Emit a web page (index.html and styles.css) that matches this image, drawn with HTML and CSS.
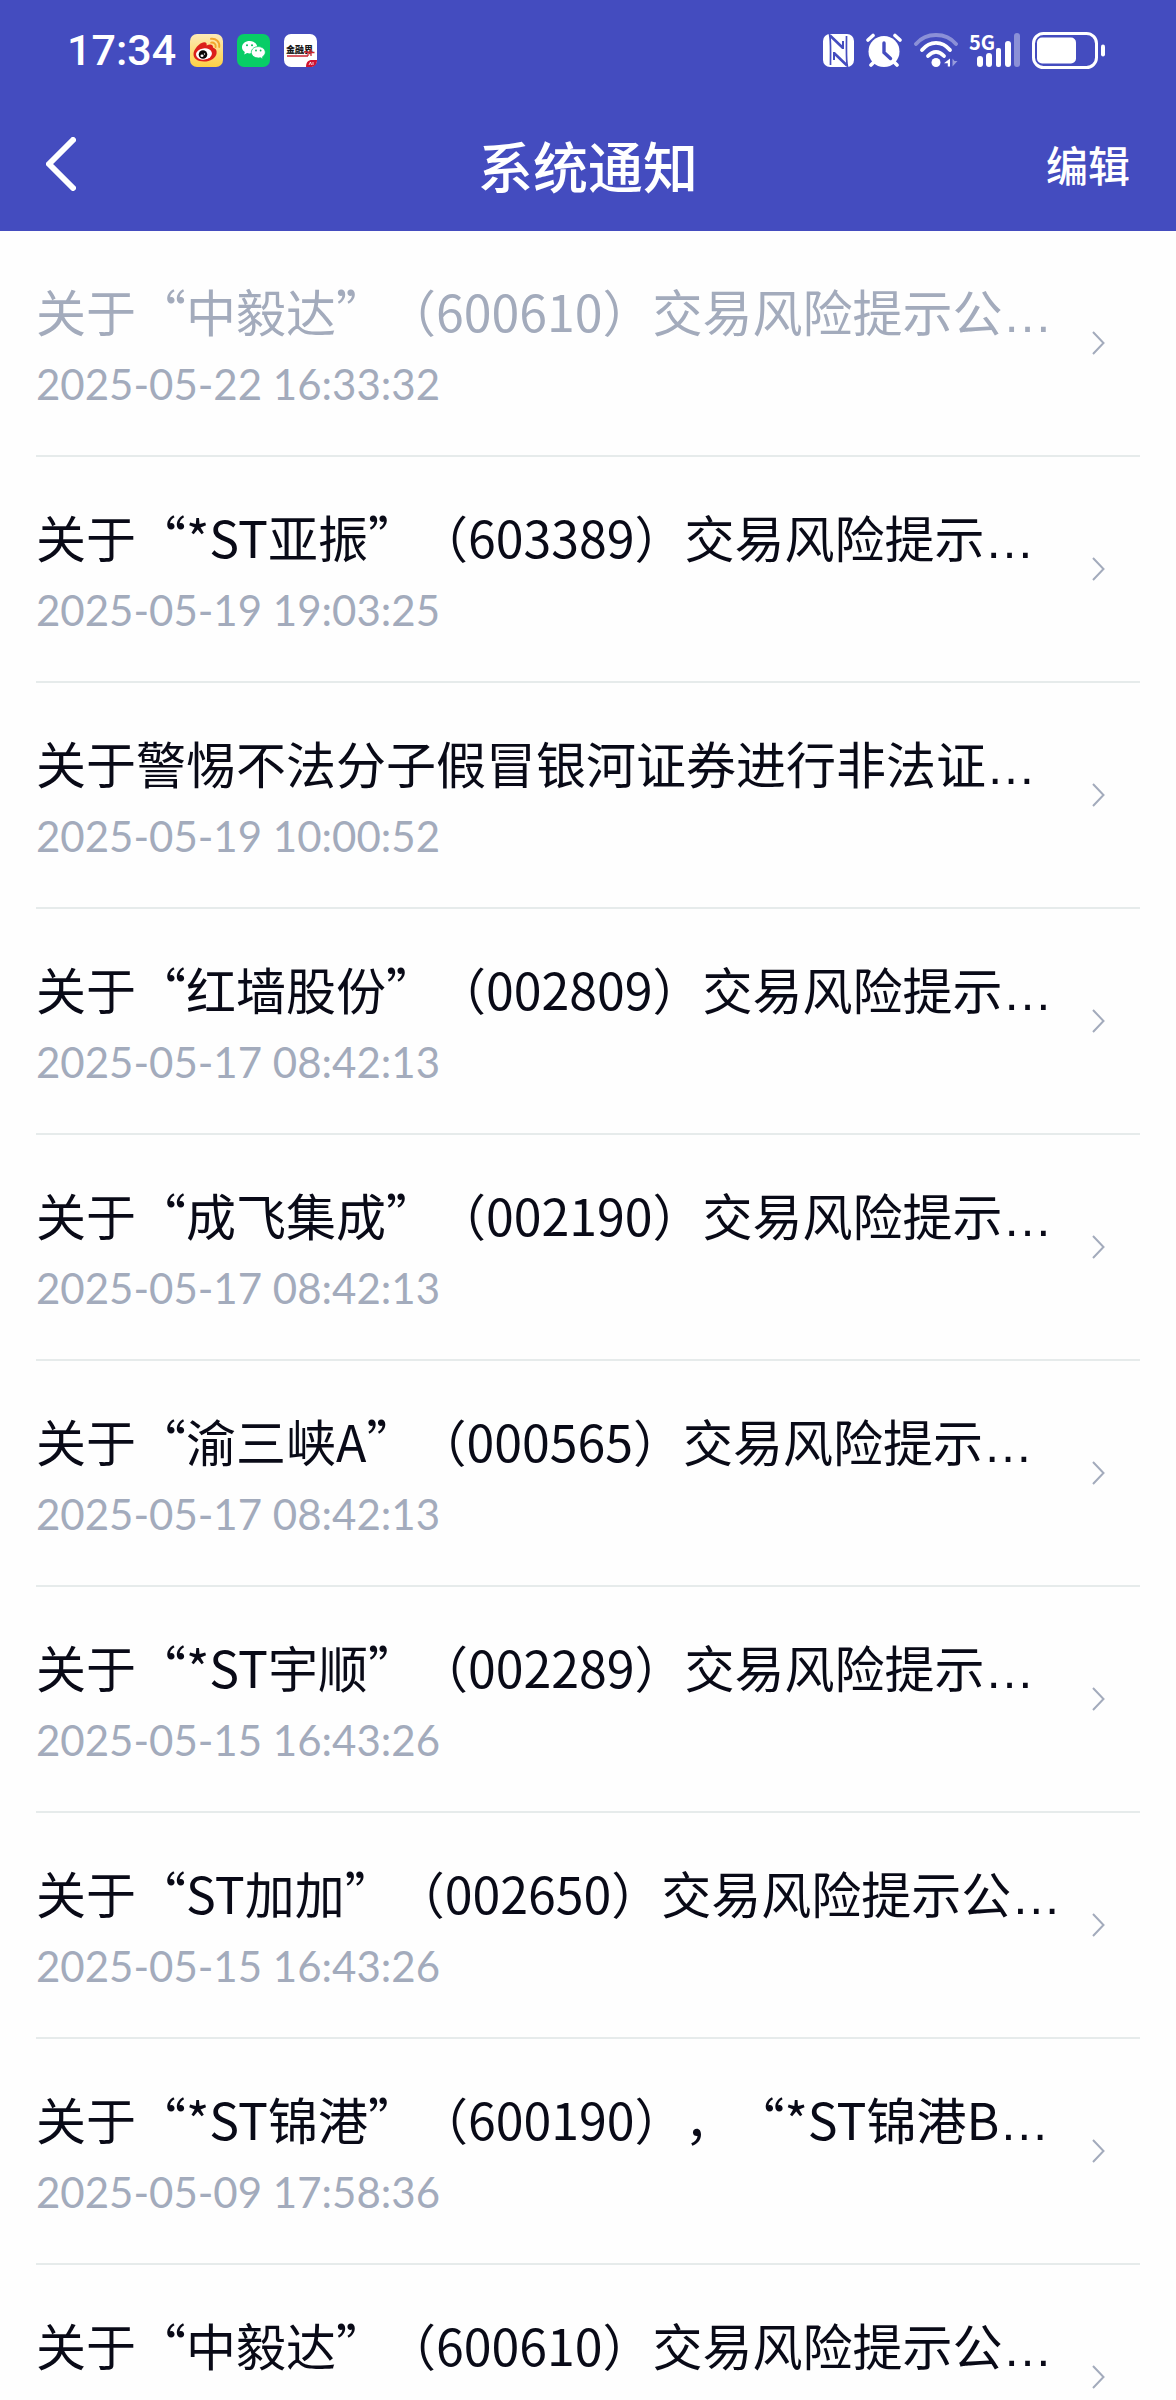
FILE: index.html
```html
<!DOCTYPE html>
<html lang="zh-CN">
<head>
<meta charset="utf-8">
<meta name="viewport" content="width=device-width, initial-scale=1">
<title>系统通知</title>
<link rel="stylesheet" href="styles.css">
</head>
<body>
<svg class="sprite"><symbol id="chevron" viewBox="0 0 14 24"><path d="M2 1l10.500 11L2 23" fill="none" stroke="#a3abbc" stroke-width="2"/></symbol></svg>
<div class="screen">
  <header class="header">
    <div class="status">
      <div class="status-left">
        <time class="clock">17:34</time>
        <svg class="app-icon" viewBox="0 0 33 33" role="img" aria-label="微博">
          <defs><linearGradient id="wb" x1="0" y1="0" x2="0" y2="1"><stop offset="0" stop-color="#fdeab8"/><stop offset="1" stop-color="#fdd045"/></linearGradient></defs>
          <rect width="33" height="33" rx="7" fill="url(#wb)"/>
          <path d="M3.500 20c0-4.500 6-11.500 10.500-11.800 2.500-.2 3 1.600 2.600 3.200 3-1.400 6.800-1.400 6.400 2.200 2.600 1 4 2.600 3.600 5.600-.6 4.800-6.400 8.300-12.600 8.300S3.500 24.800 3.500 20z" fill="#dc1f1b"/>
          <ellipse cx="14" cy="20" rx="8" ry="5.600" fill="#fff" transform="rotate(-8 14 20)"/>
          <circle cx="13" cy="20.500" r="4.300" fill="#080808"/>
          <ellipse cx="12" cy="21.800" rx="1.500" ry="1.200" fill="#fff"/><circle cx="14.500" cy="20" r=".7" fill="#fff"/>
          <path d="M21 4.800c5-.6 9 3.200 8.200 8.200M21.200 8.600c2.900-.3 4.900 1.600 4.400 4.400" fill="none" stroke="#f2a52d" stroke-width="1.900" stroke-linecap="round"/>
        </svg>
        <svg class="app-icon" viewBox="0 0 33 33" role="img" aria-label="微信">
          <rect width="33" height="33" rx="7" fill="#08cd66"/>
          <path d="M12.600 7C8.400 7 5 9.700 5 13.200c0 2 1.100 3.700 2.800 4.800l-.6 2.600 2.900-1.500c.8.200 1.600.3 2.500.3 4.200 0 7.600-2.700 7.600-6.200S16.800 7 12.600 7z" fill="#fff"/>
          <path d="M21.300 12.600c-3.900 0-7 2.500-7 5.700s3.100 5.700 7 5.700c.8 0 1.500-.1 2.200-.3l2.500 1.400-.5-2.300c1.700-1 2.800-2.600 2.800-4.500 0-3.200-3.100-5.700-7-5.700z" fill="#fff" stroke="#08cd66" stroke-width=".8"/>
          <g fill="#08b95c"><circle cx="10" cy="11.300" r="1"/><circle cx="15" cy="11.300" r="1"/><circle cx="19" cy="16.500" r=".9"/><circle cx="23.600" cy="16.500" r=".9"/></g>
        </svg>
        <svg class="app-icon" viewBox="0 0 33 33" role="img" aria-label="金融界">
          <rect width="33" height="33" rx="7" fill="#fff"/>
          <text class="logo-text" x="2" y="18.500">金融界</text>
          <path d="M3 19.300h17" stroke="#333" stroke-width="1.500" stroke-dasharray="2 .7"/>
          <path d="M3 22h21M24 22v-4h-4M27 15v7M24 18.500h6.500" fill="none" stroke="#c92532" stroke-width="1.300"/>
          <path d="M22 33c0-4.500 2-7 6-7h5c0 4.500-2.500 7-7 7z" fill="#cf1230"/>
          <path d="M25 31l1.500-3 1 3M29 28v3" fill="none" stroke="#fff" stroke-width=".8"/>
        </svg>
      </div>
      <div class="status-right">
        <svg class="nfc" viewBox="0 0 31 33" role="img" aria-label="NFC">
          <rect width="31" height="33" rx="7" fill="#fff"/>
          <g fill="none" stroke="#444cbf">
            <path d="M6.500 0C8 6 7.500 14 7.500 31M24.500 33C23 27 23.500 19 23.500 2" stroke-width="1.700"/>
            <path d="M7 1.500l13 12.500M24 31.500L11 19" stroke-width="2.600"/>
            <path d="M20 7v8M11 18v8" stroke-width="2"/>
          </g>
        </svg>
        <svg class="alarm" viewBox="0 0 36 34" role="img" aria-label="闹钟">
          <circle cx="18" cy="18.500" r="15.500" fill="#fff"/>
          <path d="M2 7l5-4.500M34 7l-5-4.500M5 32l5-5M31 32l-5-5" fill="none" stroke="#fff" stroke-width="3.600" stroke-linecap="round"/>
          <path d="M18 10v9.500l6.500 6" fill="none" stroke="#444cbf" stroke-width="3.400" stroke-linecap="round"/>
        </svg>
        <svg class="wifi" viewBox="0 0 44 34" role="img" aria-label="WLAN">
          <g fill="none" stroke="#fff" stroke-width="3.800" stroke-linecap="round">
            <path d="M2 11C12-1 32-1 42 11" opacity=".38"/>
            <path d="M8 17c8-9.500 20-9.500 28 0"/>
            <path d="M14 23c5-5.500 11-5.500 16 0"/>
          </g>
          <circle cx="22" cy="29.500" r="4.500" fill="#fff"/>
          <path d="M36 25.500v8h-2.200v-3.200H30z" fill="#fff"/><path d="M38.500 25.500v8l5-5.500h-3z" fill="#fff" opacity=".45"/>
        </svg>
        <svg class="signal" viewBox="0 0 50 34" role="img" aria-label="5G">
          <text class="net-text" x="-1" y="17">5G</text>
          <g fill="#fff"><rect x="7" y="23" width="6" height="11" rx="3"/><rect x="16" y="20" width="6" height="14" rx="3"/><rect x="26" y="15" width="5" height="19" rx="2"/><rect x="35" y="8" width="6" height="26" rx="3"/><rect x="44" y="0" width="6" height="34" rx="3" opacity=".38"/></g>
        </svg>
        <svg class="battery" viewBox="0 0 74 37" role="img" aria-label="电量">
          <rect x="1.500" y="1.500" width="63" height="34" rx="10" fill="none" stroke="#fff" stroke-width="3"/>
          <rect x="5" y="5.500" width="39" height="26" rx="5" fill="#fff"/>
          <rect x="69" y="12.500" width="4" height="12" rx="2" fill="#fff"/>
        </svg>
      </div>
    </div>
    <nav class="nav">
      <button class="back" type="button" aria-label="返回">
        <svg class="back-icon" viewBox="0 0 30 54"><path d="M27 3L3 27l24 24" fill="none" stroke="#fff" stroke-width="6" stroke-linecap="round" stroke-linejoin="round"/></svg>
      </button>
      <h1 class="title">系统通知</h1>
      <button class="edit" type="button">编辑</button>
    </nav>
  </header>

  <main class="list-wrap">
    <ul class="list">
      <li class="item read"><a class="link" href="#n1"><span class="body"><span class="subject">关于“中毅达”（600610）交易风险提示公<span class="dots">…</span></span><time class="date">2025-05-22 16:33:32</time></span><svg class="chevron"><use href="#chevron"/></svg></a></li>
      <li class="item"><a class="link" href="#n2"><span class="body"><span class="subject">关于“*ST亚振”（603389）交易风险提示<span class="dots">…</span></span><time class="date">2025-05-19 19:03:25</time></span><svg class="chevron"><use href="#chevron"/></svg></a></li>
      <li class="item"><a class="link" href="#n3"><span class="body"><span class="subject">关于警惕不法分子假冒银河证券进行非法证<span class="dots">…</span></span><time class="date">2025-05-19 10:00:52</time></span><svg class="chevron"><use href="#chevron"/></svg></a></li>
      <li class="item"><a class="link" href="#n4"><span class="body"><span class="subject">关于“红墙股份”（002809）交易风险提示<span class="dots">…</span></span><time class="date">2025-05-17 08:42:13</time></span><svg class="chevron"><use href="#chevron"/></svg></a></li>
      <li class="item"><a class="link" href="#n5"><span class="body"><span class="subject">关于“成飞集成”（002190）交易风险提示<span class="dots">…</span></span><time class="date">2025-05-17 08:42:13</time></span><svg class="chevron"><use href="#chevron"/></svg></a></li>
      <li class="item"><a class="link" href="#n6"><span class="body"><span class="subject">关于“渝三峡A”（000565）交易风险提示<span class="dots">…</span></span><time class="date">2025-05-17 08:42:13</time></span><svg class="chevron"><use href="#chevron"/></svg></a></li>
      <li class="item"><a class="link" href="#n7"><span class="body"><span class="subject">关于“*ST宇顺”（002289）交易风险提示<span class="dots">…</span></span><time class="date">2025-05-15 16:43:26</time></span><svg class="chevron"><use href="#chevron"/></svg></a></li>
      <li class="item"><a class="link" href="#n8"><span class="body"><span class="subject">关于“ST加加”（002650）交易风险提示公<span class="dots">…</span></span><time class="date">2025-05-15 16:43:26</time></span><svg class="chevron"><use href="#chevron"/></svg></a></li>
      <li class="item"><a class="link" href="#n9"><span class="body"><span class="subject">关于“*ST锦港”（600190），“*ST锦港B<span class="dots">…</span></span><time class="date">2025-05-09 17:58:36</time></span><svg class="chevron"><use href="#chevron"/></svg></a></li>
      <li class="item"><a class="link" href="#n10"><span class="body"><span class="subject">关于“中毅达”（600610）交易风险提示公<span class="dots">…</span></span></span><svg class="chevron"><use href="#chevron"/></svg></a></li>
    </ul>
  </main>
</div>
</body>
</html>
```
FILE: styles.css
```css
* {
  box-sizing: border-box;
}

body {
  margin: 0;
  background: #fefefe;
  color: #090a17;
  font-family: "Noto Sans CJK SC", sans-serif;
  text-spacing-trim: space-all;
}

.sprite {
  display: none;
}

.screen {
  display: flex;
  flex-direction: column;
  height: 100vh;
}

/* Header */
.header {
  flex: none;
  background: #444cbf;
  color: #fff;
}

.status {
  display: flex;
  justify-content: space-between;
  align-items: center;
  height: 100px;
  padding: 0 70px 0 67px;
}

.status-left {
  display: flex;
  align-items: center;
  gap: 14px;
}

.clock {
  font: 500 43px/52px Roboto, sans-serif;
}

.app-icon {
  width: 33px;
  height: 33px;
}

.logo-text {
  font: 900 9px "Noto Sans CJK SC", sans-serif;
  fill: #161616;
}

.status-right {
  display: flex;
  align-items: center;
  gap: 12px;
}

.nfc {
  width: 31px;
  height: 33px;
}

.alarm {
  width: 36px;
  height: 34px;
}

.wifi {
  width: 44px;
  height: 34px;
}

.signal {
  width: 50px;
  height: 34px;
  overflow: visible;
}

.net-text {
  font: 700 20px "Noto Sans CJK SC", sans-serif;
  fill: #fff;
}

.battery {
  width: 74px;
  height: 37px;
}

.nav {
  display: grid;
  grid-template-columns: 1fr auto 1fr;
  align-items: center;
  height: 131px;
  padding: 0 46px 3px;
}

.back,
.edit {
  padding: 0;
  border: 0;
  background: none;
  color: inherit;
  font: 500 42px/60px "Noto Sans CJK SC", sans-serif;
  cursor: pointer;
}

.back {
  display: flex;
  justify-self: start;
}

.back-icon {
  width: 30px;
  height: 54px;
}

.edit {
  justify-self: end;
}

.title {
  margin: 0;
  font-size: 55px;
  font-weight: 500;
  line-height: 80px;
}

/* Notice list */
.list-wrap {
  flex: 1;
  min-height: 0;
  overflow-y: auto;
  scrollbar-width: none;
}

.list {
  margin: 0;
  padding: 0 36px;
  list-style: none;
}

.item {
  border-bottom: 2px solid #e6ebeb;
}

.link {
  display: flex;
  align-items: center;
  justify-content: space-between;
  min-height: 224px;
  padding-right: 35px;
  color: inherit;
  text-decoration: none;
}

.body {
  display: flex;
  flex-direction: column;
  align-self: flex-start;
  gap: 4px;
  min-width: 0;
  padding-top: 42px;
}

.subject {
  font-size: 50px;
  line-height: 74px;
  white-space: nowrap;
}

.dots {
  font-family: "Liberation Sans", sans-serif;
}

.date {
  color: #a3abbc;
  font: 42px/56px Lato, sans-serif;
}

.read {
  color: #a3abbc;
}

.chevron {
  flex: none;
  width: 14px;
  height: 24px;
}
```
